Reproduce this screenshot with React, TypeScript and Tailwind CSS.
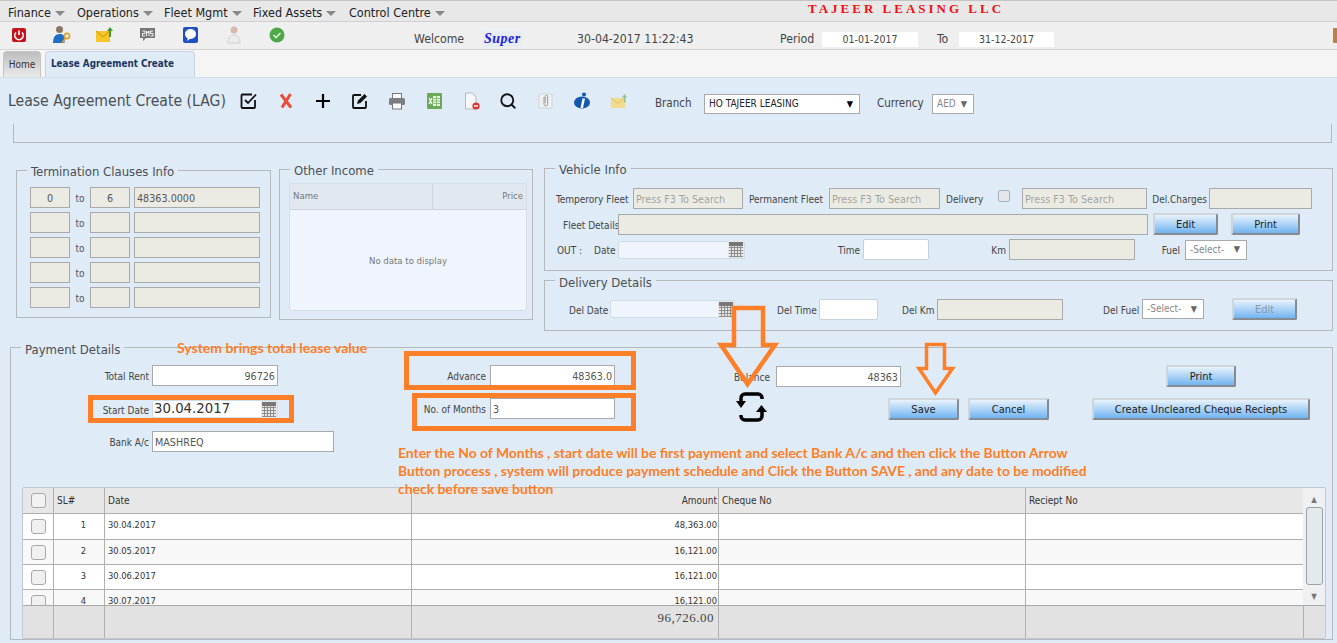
import type { ReactNode } from "react";
import { Search } from "lucide-react";

const inputBase = "h-[21px] shrink-0 border border-[#a9a9a9] px-[2px] pt-[2px] text-[10.7px] text-[#555] outline-none";
const readOnlyBox = `${inputBase} bg-[#ebebe4]`;
const whiteBox = `${inputBase} bg-white`;

function Label({ className, children }: { className: string; children: ReactNode }) {
  return <span className={`shrink-0 whitespace-nowrap pt-[3px] text-[10px] leading-none text-[#444] ${className}`}>{children}</span>;
}

function Group({ title, className, legend, children }: { title: string; className: string; legend: string; children?: ReactNode }) {
  return (
    <div className={`relative border border-[#b5b9bc] ${className}`}>
      <span className={`absolute bg-[#dfebf7] px-[4px] text-[13px] leading-[16px] text-[#4a4f55] ${legend}`}>{title}</span>
      {children}
    </div>
  );
}

function Btn({ className, children, faded }: { className: string; children: ReactNode; faded?: boolean }) {
  return (
    <button
      className={`h-[22px] shrink-0 rounded-[2px] border-2 border-t-[#d0d5da] border-l-[#d0d5da] border-r-[#858b91] border-b-[#858b91] bg-gradient-to-b from-[#e8f2fb] to-[#70b4f1] text-[11px] leading-none ${faded ? "text-[#8a98a6]" : "text-[#222]"} ${className}`}
    >
      {children}
    </button>
  );
}

function SelectBox({ text, className, grey }: { text: string; className: string; grey?: boolean }) {
  return (
    <div className={`flex h-[20px] shrink-0 items-center justify-between border border-[#a9a9a9] bg-white pl-[4px] pr-[6px] text-[10px] leading-none ${grey ? "text-[#888]" : "text-[#222]"} ${className}`}>
      <span>{text}</span>
      <span className={`text-[9px] ${grey ? "text-[#666]" : "text-black"}`}>▼</span>
    </div>
  );
}

function CalendarIcon() {
  return (
    <svg width="16" height="17" viewBox="0 0 16 17" className="shrink-0">
      <rect width="16" height="17" fill="#e6e6e6" />
      <rect x="1" y="1" width="14" height="4" fill="#777" />
      <g stroke="#8d8d8d" strokeWidth="1">
        <path d="M1 6.5h14M1 9.5h14M1 12.5h14M1 15.5h14M3.5 5v11M6.5 5v11M9.5 5v11M12.5 5v11" />
      </g>
    </svg>
  );
}

function DateBox({ className, value, big }: { className: string; value?: string; big?: boolean }) {
  return (
    <div className={`flex h-[18px] shrink-0 items-center justify-between rounded-[2px] border border-[#d2dce6] ${big ? "bg-white" : "bg-[#f0f5fd]"} ${className}`}>
      <span className={big ? "pl-[1px] font-['DejaVu_Sans',sans-serif] text-[13.3px] text-[#333]" : ""}>{value}</span>
      <CalendarIcon />
    </div>
  );
}

const topIcons: ReactNode[] = [
  <svg key="power" width="20" height="20" viewBox="0 0 20 20">
    <rect x="3" y="3" width="14" height="14" rx="2" fill="#c3141c" />
    <path d="M7 7.5a4.2 4.2 0 1 0 6 0" fill="none" stroke="#fff" strokeWidth="1.6" />
    <path d="M10 5.5v4.5" stroke="#fff" strokeWidth="1.6" />
  </svg>,
  <svg key="user" width="20" height="20" viewBox="0 0 20 20">
    <circle cx="7.5" cy="4.5" r="3.5" fill="#8a7560" />
    <path d="M1 18c0-6 2.5-9 6.5-9s5 2 5 4v5z" fill="#1e6fc4" />
    <circle cx="15" cy="11" r="2.6" fill="none" stroke="#e0a030" strokeWidth="1.6" />
    <path d="M13.5 13l-3.5 5" stroke="#e0a030" strokeWidth="1.6" />
  </svg>,
  <svg key="mail" width="20" height="20" viewBox="0 0 20 20">
    <rect x="1" y="6" width="14" height="11" fill="#f6c528" />
    <path d="M1 6l7 6 7-6" fill="none" stroke="#c99510" strokeWidth="1" />
    <path d="M15 2l3 4h-2v6h-2V6h-2z" fill="#3f9b3a" />
  </svg>,
  <svg key="sms" width="20" height="20" viewBox="0 0 20 20">
    <path d="M2 3h15v10H8l-3 3v-3H2z" fill="#777" />
    <path d="M4.5 6H7v2.5H4.5V11H7M8.5 11V6L10 8l1-2v5M15 6h-2.5v2.5H15V11h-2.5" fill="none" stroke="#fff" strokeWidth="0.9" />
  </svg>,
  <svg key="chat" width="20" height="20" viewBox="0 0 20 20">
    <rect x="2" y="2" width="15" height="16" rx="2" fill="#1f4fc0" />
    <ellipse cx="9.5" cy="9" rx="5.5" ry="5" fill="#fff" />
    <path d="M7 12l-1 4 4-3z" fill="#fff" />
  </svg>,
  <svg key="person" width="20" height="20" viewBox="0 0 20 20">
    <circle cx="10" cy="5" r="3.5" fill="#d8b8a8" />
    <path d="M4 18c0-5 2.5-8 6-8s6 3 6 8z" fill="#ececec" stroke="#cfcfcf" />
  </svg>,
  <svg key="ok" width="20" height="20" viewBox="0 0 20 20">
    <circle cx="10" cy="10" r="7.5" fill="#4ea84a" />
    <path d="M6.5 10l2.5 2.5 4.5-4.5" fill="none" stroke="#d6f2d2" strokeWidth="1.6" />
  </svg>,
];

const formIcons: ReactNode[] = [
  <svg key="check" width="20" height="20" viewBox="0 0 20 20">
    <path d="M16 9v7a1 1 0 0 1-1 1H3.5a1 1 0 0 1-1-1V4.5a1 1 0 0 1 1-1H13" fill="none" stroke="#111" strokeWidth="1.8" />
    <path d="M6 9l3 3 8-8.5" fill="none" stroke="#111" strokeWidth="1.8" />
  </svg>,
  <svg key="x" width="20" height="20" viewBox="0 0 20 20">
    <path d="M5 3.5l10 13M14.5 3L6 16.5" fill="none" stroke="#ea4b3c" strokeWidth="3" />
  </svg>,
  <svg key="plus" width="20" height="20" viewBox="0 0 20 20">
    <path d="M10 3v14M3 10h14" stroke="#000" strokeWidth="2.2" />
  </svg>,
  <svg key="edit" width="20" height="20" viewBox="0 0 20 20">
    <path d="M16 10v6a1 1 0 0 1-1 1H4a1 1 0 0 1-1-1V5a1 1 0 0 1 1-1h7" fill="none" stroke="#111" strokeWidth="1.8" />
    <path d="M7 13l1-3.5L14.5 3l2.5 2.5L10.5 12z" fill="#111" />
  </svg>,
  <svg key="print" width="20" height="20" viewBox="0 0 20 20">
    <rect x="5.5" y="2.5" width="9" height="5" fill="#fff" stroke="#777" />
    <rect x="2" y="7" width="16" height="7" rx="1.5" fill="#7c7f82" />
    <rect x="5.5" y="12" width="9" height="6" fill="#fff" stroke="#777" />
  </svg>,
  <svg key="excel" width="20" height="20" viewBox="0 0 20 20">
    <rect x="3" y="2" width="15" height="16" rx="1" fill="#6ca85a" />
    <rect x="9" y="5" width="7" height="10" fill="#e8f3e2" />
    <path d="M9 7.5h7M9 10h7M9 12.5h7M12.5 5v10" stroke="#6ca85a" strokeWidth="0.7" />
    <path d="M5 7l3 6M8 7l-3 6" stroke="#fff" strokeWidth="1.2" />
  </svg>,
  <svg key="doc" width="20" height="20" viewBox="0 0 20 20">
    <path d="M4.5 2h7l3.5 4v12H4.5z" fill="#f7f7f7" stroke="#b9b9b9" />
    <circle cx="15" cy="15" r="3.6" fill="#d8362f" />
    <path d="M13 15h4" stroke="#fff" strokeWidth="1.4" />
  </svg>,
  <div key="search" className="flex h-[20px] w-[20px] items-center justify-center">
    <Search size={18} strokeWidth={2.4} color="#111" />
  </div>,
  <svg key="clip" width="20" height="20" viewBox="0 0 20 20">
    <rect x="4" y="3" width="13" height="14" fill="#eef0f2" stroke="#d2d4d6" />
    <path d="M9 6v7a1.8 1.8 0 0 0 3.6 0V5.5a1.2 1.2 0 0 0-2.4 0V12" fill="none" stroke="#9b9b9b" strokeWidth="1" />
  </svg>,
  <svg key="info" width="20" height="20" viewBox="0 0 20 20">
    <ellipse cx="10" cy="11.5" rx="8" ry="6" fill="#1457b0" />
    <path d="M10.5 7.5l-2 9.5h2.5l2-9.5z" fill="#fff" />
    <circle cx="12" cy="3.5" r="2" fill="#1457b0" />
  </svg>,
  <svg key="mail2" width="20" height="20" viewBox="0 0 20 20">
    <rect x="2" y="7" width="14" height="10" fill="#f2dc8c" />
    <path d="M2 7l7 5.5L16 7" fill="none" stroke="#dcc26a" strokeWidth="1" />
    <path d="M15.5 3l2.5 3.5h-1.5v5H15v-5h-2z" fill="#8fc48a" />
  </svg>,
];

const rows = [
  { sl: "1", date: "30.04.2017", amount: "48,363.00", bg: "bg-white", h: "h-[26px]" },
  { sl: "2", date: "30.05.2017", amount: "16,121.00", bg: "bg-[#f8f8f8]", h: "h-[25px]" },
  { sl: "3", date: "30.06.2017", amount: "16,121.00", bg: "bg-white", h: "h-[25px]" },
  { sl: "4", date: "30.07.2017", amount: "16,121.00", bg: "bg-[#f8f8f8]", h: "h-[25px]" },
];

const colGrid = "grid grid-cols-[31px_51px_307px_307px_307px_278px]";
const cell = "border-r border-[#b0b0b0] px-[3px]";

function TermRow({ from, to, amount }: { from?: string; to?: string; amount?: string }) {
  return (
    <div className="flex items-center">
      <input readOnly value={from ?? ""} className={`${readOnlyBox} w-[40px] text-center`} />
      <span className="w-[20px] pt-[2px] text-center text-[10px] text-[#555]">to</span>
      <input readOnly value={to ?? ""} className={`${readOnlyBox} w-[40px] text-center`} />
      <input readOnly value={amount ?? ""} className={`${readOnlyBox} ml-[4px] w-[126px]`} />
    </div>
  );
}

export default function App() {
  return (
    <div className="relative h-[643px] w-[1337px] overflow-hidden bg-[#dfebf7] font-['DejaVu_Sans_Condensed','Open_Sans',sans-serif]">
      {/* menu */}
      <div className="relative flex h-[22px] items-center border-t border-b border-t-[#c4c4c4] border-b-[#cfcfcf] bg-[#e8e8e8] pt-[5px] pl-[8px] text-[12.5px] text-[#222]">
        {[
          ["Finance", "w-[69px]"],
          ["Operations", "w-[87px]"],
          ["Fleet Mgmt", "w-[89px]"],
          ["Fixed Assets", "w-[96px]"],
          ["Control Centre", "w-[100px]"],
        ].map(([name, w]) => (
          <div key={name} className={`flex items-center gap-[4px] whitespace-nowrap ${w}`}>
            {name}
            <span className="h-0 w-0 border-x-[5px] border-t-[5px] border-x-transparent border-t-[#888]" />
          </div>
        ))}
        <span className="mt-[-10px] ml-[359px] font-['Liberation_Serif',serif] text-[13px] font-bold tracking-[3px] whitespace-nowrap text-[#f01010]">TAJEER LEASING LLC</span>
      </div>

      {/* quick icons */}
      <div className="flex h-[28px] items-center border-b border-[#d4d4d4] bg-[#efefef] pl-[9px] text-[12.2px] text-[#444]">
        <div className="mt-[-1px] flex gap-[23px]">{topIcons}</div>
        <div className="flex items-center pt-[8px]">
          <span className="ml-[127px] w-[69px]">Welcome</span>
          <span className="flex h-[16px] w-[94px] items-center">
            <span className="bg-[#e6edf5] px-[1px] font-['Liberation_Serif',serif] text-[14px] leading-[16px] font-bold tracking-[0.5px] text-[#2222d8] italic">Super</span>
          </span>
          <span className="w-[203px]">30-04-2017 11:22:43</span>
          <span className="w-[42px]">Period</span>
          <div className="flex h-[15px] w-[96px] items-center justify-center bg-white text-[10.5px]">01-01-2017</div>
          <span className="ml-[19px] w-[22px]">To</span>
          <div className="flex h-[15px] w-[95px] items-center justify-center bg-white text-[10.5px]">31-12-2017</div>
        </div>
        <div className="mt-[-1px] ml-auto h-[15px] w-[4px] rounded-l-[1px] bg-[#b8804a]" />
      </div>

      {/* tabs */}
      <div className="flex h-[28px] items-end border-b border-[#d4dde6] bg-[#f5f5f5] pl-[3px]">
        <div className="flex h-[26px] w-[38px] items-center justify-center rounded-t-[4px] border border-b-0 border-[#c4c4c4] bg-gradient-to-b from-[#bdbdbd] to-[#ececec] text-[10px] text-[#333]">Home</div>
        <div className="ml-[4px] flex h-[26px] w-[150px] items-center rounded-t-[4px] border border-b-0 border-[#c8d4e0] bg-[#dfebf7] pl-[5px] text-[9.8px] font-bold text-[#1c3660]">Lease Agreement Create</div>
      </div>

      {/* title row */}
      <div className="flex h-[46px] items-center pl-[8px]">
        <span className="mt-[2px] w-[231px] text-[15.6px] whitespace-nowrap text-[#4a4f55]">Lease Agreement Create (LAG)</span>
        <div className="flex items-center gap-[17px]">{formIcons}</div>
        <Label className="mt-[3px] ml-[26px] w-[49px] text-[11.5px]">Branch</Label>
        <div className="mt-[6px]"><SelectBox text="HO TAJEER LEASING" className="w-[156px]" /></div>
        <Label className="mt-[3px] ml-[17px] w-[55px] text-[11.5px]">Currency</Label>
        <div className="mt-[6px]"><SelectBox text="AED" className="w-[42px]" grey /></div>
      </div>

      {/* cut off panel above */}
      <div className="ml-[13px] h-[19px] w-[1319px] border-x border-b border-[#b5b9bc]" />

      <div className="mt-[25px] flex items-start">
        <Group title="Termination Clauses Info" legend="-top-[7px] left-[10px]" className="mt-[2px] ml-[16px] h-[148px] w-[255px]">
          <div className="flex flex-col gap-[4px] pt-[16px] pl-[13px]">
            <TermRow from="0" to="6" amount="48363.0000" />
            <TermRow />
            <TermRow />
            <TermRow />
            <TermRow />
          </div>
        </Group>

        <Group title="Other Income" legend="-top-[7px] left-[10px]" className="mt-[1px] ml-[8px] h-[151px] w-[254px]">
          <div className="mt-[13px] ml-[9px] flex h-[128px] w-[238px] flex-col rounded-[2px] border border-[#d6dde6] bg-[#f0f5fd] text-[9.5px] text-[#777]">
            <div className="flex h-[26px] items-center border-b border-[#ccd3dc] bg-[#e2e8f0]">
              <span className="flex h-full w-[143px] items-center border-r border-[#ccd3dc] pl-[3px]">Name</span>
              <span className="flex-1 pr-[3px] text-right">Price</span>
            </div>
            <div className="flex flex-1 items-center justify-center pt-[3px]">No data to display</div>
          </div>
        </Group>

        <div className="ml-[11px] w-[789px]">
          <Group title="Vehicle Info" legend="-top-[7px] left-[10px]" className="h-[103px]">
            <div className="flex flex-col">
              <div className="mt-[19px] flex items-center">
                <Label className="ml-[11px] w-[72px] text-right">Temperory Fleet</Label>
                <input readOnly placeholder="Press F3 To Search" className={`${readOnlyBox} ml-[5px] w-[110px]`} />
                <Label className="ml-[6px] w-[71px] text-right">Permanent Fleet</Label>
                <input readOnly placeholder="Press F3 To Search" className={`${readOnlyBox} ml-[9px] w-[111px]`} />
                <Label className="ml-[6px] w-[36px] text-right">Delivery</Label>
                <span className="mt-[-6px] ml-[16px] h-[12px] w-[12px] shrink-0 rounded-[2px] border border-[#a9b3bd] bg-[#e4e8ec]" />
                <input readOnly placeholder="Press F3 To Search" className={`${readOnlyBox} ml-[12px] w-[125px]`} />
                <Label className="ml-[5px] w-[55px] text-right">Del.Charges</Label>
                <input readOnly className={`${readOnlyBox} ml-[2px] w-[103px]`} />
              </div>
              <div className="mt-[4px] flex items-center">
                <Label className="ml-[18px] w-[52px] text-right">Fleet Details</Label>
                <input readOnly className={`${readOnlyBox} ml-[3px] w-[530px]`} />
                <Btn className="ml-[5px] w-[65px]">Edit</Btn>
                <Btn className="ml-[13px] w-[69px]">Print</Btn>
              </div>
              <div className="mt-[4px] flex items-center">
                <Label className="ml-[12px] w-[24px]">OUT :</Label>
                <Label className="ml-[13px] w-[21px] text-right">Date</Label>
                <DateBox className="ml-[3px] w-[127px]" />
                <Label className="ml-[93px] w-[22px] text-right">Time</Label>
                <input readOnly className={`${whiteBox} ml-[3px] w-[66px] rounded-[2px] border-[#c8d2dc]`} />
                <Label className="ml-[62px] w-[15px] text-right">Km</Label>
                <input readOnly className={`${readOnlyBox} ml-[3px] w-[126px]`} />
                <Label className="ml-[26px] w-[19px] text-right">Fuel</Label>
                <SelectBox text="-Select-" className="ml-[5px] w-[62px]" grey />
              </div>
            </div>
          </Group>

          <Group title="Delivery Details" legend="-top-[6px] left-[10px]" className="mt-[9px] h-[51px]">
            <div className="mt-[17px] flex items-center">
              <Label className="ml-[24px] w-[37px] text-right">Del Date</Label>
              <DateBox className="ml-[4px] w-[125px]" />
              <Label className="ml-[42px] w-[38px] text-right">Del Time</Label>
              <input readOnly className={`${whiteBox} ml-[4px] w-[59px] rounded-[2px] border-[#c8d2dc]`} />
              <Label className="ml-[24px] w-[31px] text-right">Del Km</Label>
              <input readOnly className={`${readOnlyBox} ml-[4px] w-[126px]`} />
              <Label className="ml-[40px] w-[36px] text-right">Del Fuel</Label>
              <SelectBox text="-Select-" className="ml-[3px] w-[62px]" grey />
              <Btn faded className="ml-[28px] w-[65px]">Edit</Btn>
            </div>
          </Group>
        </div>
      </div>

      {/* payment */}
      <Group title="Payment Details" legend="-top-[6px] left-[10px]" className="mt-[16px] ml-[10px] h-[293px] w-[1323px]">
        <div className="flex h-[139px] items-start pt-[17px]">
          <div className="w-[323px]">
            <div className="flex items-center">
              <Label className="w-[138px] text-right">Total Rent</Label>
              <input readOnly value="96726" className={`${whiteBox} ml-[3px] w-[126px] text-right`} />
            </div>
            <div className="mt-[14px] flex h-[18px] items-center">
              <Label className="w-[138px] text-right">Start Date</Label>
              <DateBox value="30.04.2017" big className="ml-[3px] w-[126px]" />
            </div>
            <div className="mt-[13px] flex items-center">
              <Label className="w-[138px] text-right">Bank A/c</Label>
              <input readOnly value="MASHREQ" className={`${whiteBox} ml-[3px] w-[182px]`} />
            </div>
          </div>
          <div className="w-[281px]">
            <div className="flex items-center">
              <Label className="w-[152px] text-right">Advance</Label>
              <input readOnly value="48363.0" className={`${whiteBox} ml-[4px] w-[125px] text-right`} />
            </div>
            <div className="mt-[12px] flex items-center">
              <Label className="w-[152px] text-right">No. of Months</Label>
              <input readOnly value="3" className={`${whiteBox} ml-[4px] w-[125px]`} />
            </div>
          </div>
          <div>
            <div className="flex items-center">
              <Label className="w-[155px] text-right">Balance</Label>
              <input readOnly value="48363" className={`${whiteBox} ml-[6px] w-[125px] text-right`} />
              <Btn className="ml-[265px] w-[70px]">Print</Btn>
            </div>
            <div className="mt-[11px] flex items-start">
              <svg width="31" height="30" viewBox="0 0 31 30" className="mt-[-6px] ml-[121px] shrink-0">
                <path d="M5 9V6a4 4 0 0 1 4-4h13a4 4 0 0 1 4 4v1M26 20v4a4 4 0 0 1-4 4H9a4 4 0 0 1-4-4v-1" fill="none" stroke="#000" strokeWidth="3.5" />
                <path d="M0 9h10l-5 7zM20 20h11l-5.5-7z" fill="#000" />
              </svg>
              <Btn className="ml-[121px] w-[71px]">Save</Btn>
              <Btn className="ml-[9px] w-[81px]">Cancel</Btn>
              <Btn className="ml-[43px] w-[218px]">Create Uncleared Cheque Reciepts</Btn>
            </div>
          </div>
        </div>

        {/* schedule grid */}
        <div className="ml-[11px] flex h-[152px] w-[1304px] flex-col overflow-hidden rounded-[2px] border border-[#c0c8d0] text-[10px] text-[#333]">
          <div className="flex h-[117px]">
            <div className="w-[1281px] overflow-hidden">
              <div className={`${colGrid} h-[26px] items-stretch border-b border-[#b0b0b0] bg-[#e7e7e7]`}>
                <div className={`${cell} flex items-center justify-center`}><span className="h-[15px] w-[15px] rounded-[3px] border border-[#a9a9a9] bg-[#f2f2f2]" /></div>
                <div className={`${cell} flex items-center`}>SL#</div>
                <div className={`${cell} flex items-center`}>Date</div>
                <div className={`${cell} flex items-center justify-end pr-[1px]`}>Amount</div>
                <div className={`${cell} flex items-center`}>Cheque No</div>
                <div className={`${cell} flex items-center`}>Reciept No</div>
              </div>
              {rows.map((r) => (
                <div key={r.sl} className={`${colGrid} ${r.h} ${r.bg} items-stretch border-b border-[#b0b0b0] text-[9.3px]`}>
                  <div className={`${cell} flex items-center justify-center`}><span className="h-[15px] w-[15px] shrink-0 rounded-[3px] border border-[#a9a9a9] bg-[#f0f0f0]" /></div>
                  <div className={`${cell} flex items-center justify-center pb-[3px] pl-[12px]`}>{r.sl}</div>
                  <div className={`${cell} flex items-center pb-[3px]`}>{r.date}</div>
                  <div className={`${cell} flex items-center justify-end pr-[1px] pb-[3px]`}>{r.amount}</div>
                  <div className={cell} />
                  <div className={cell} />
                </div>
              ))}
            </div>
            <div className="flex w-[22px] flex-col items-center bg-[#eef0f2] text-[8px] text-[#777]">
              <span className="mt-[5px] h-[13px] leading-[13px]">▲</span>
              <span className="mt-[1px] h-[78px] w-[17px] rounded-[3px] border border-[#9aa2aa] bg-[#e4e9ee]" />
              <span className="mt-[5px] leading-[13px]">▼</span>
            </div>
          </div>
          <div className="grid flex-1 grid-cols-[31px_51px_307px_307px_307px_278px_22px] border-t border-[#a8a8a8] bg-[#e2e2e2]">
            <div className="border-r border-[#b0b0b0]" />
            <div className="border-r border-[#b0b0b0]" />
            <div className="border-r border-[#b0b0b0]" />
            <div className="border-r border-[#b0b0b0] pt-[2px] pr-[4px] text-right font-['Liberation_Serif',serif] text-[13px] tracking-[0.5px] text-[#444]">96,726.00</div>
            <div className="border-r border-[#b0b0b0]" />
            <div className="border-r border-[#b0b0b0]" />
            <div />
          </div>
        </div>
      </Group>

      {/* annotations drawn over the screen */}
      <div className="absolute top-[395px] left-[88px] h-[28px] w-[206px] border-[5px] border-[#fe7f27]" />
      <div className="absolute top-[351px] left-[404px] h-[39px] w-[232px] border-[5px] border-[#fe7f27]" />
      <div className="absolute top-[393px] left-[412px] h-[38px] w-[224px] border-[5px] border-[#fe7f27]" />
      <span className="absolute top-[339px] left-[177px] font-['Lato',sans-serif] text-[14px] leading-[18px] font-bold whitespace-nowrap text-[#fe7f27]">System brings total lease value</span>
      <div className="absolute top-[444px] left-[398px] font-['Lato',sans-serif] text-[13.9px] leading-[18px] font-bold whitespace-nowrap text-[#fe7f27]">
        <div>Enter the No of Months , start date will be first payment and select Bank A/c and then click the Button Arrow</div>
        <div>Button process , system will produce payment schedule and Click the Button SAVE , and any date to be modified</div>
        <div>check before save button</div>
      </div>
      <svg width="70" height="95" viewBox="0 0 70 95" className="absolute top-[300px] left-[712px]">
        <path d="M22 8h29v37h12L35.5 84 9 45h13z" fill="none" stroke="#fe7f27" strokeWidth="4.5" />
      </svg>
      <svg width="50" height="60" viewBox="0 0 50 60" className="absolute top-[338px] left-[911px]">
        <path d="M15.5 6.5h18v24h8L24.5 55 8 30.5h7.5z" fill="none" stroke="#fe7f27" strokeWidth="3.5" />
      </svg>
    </div>
  );
}
